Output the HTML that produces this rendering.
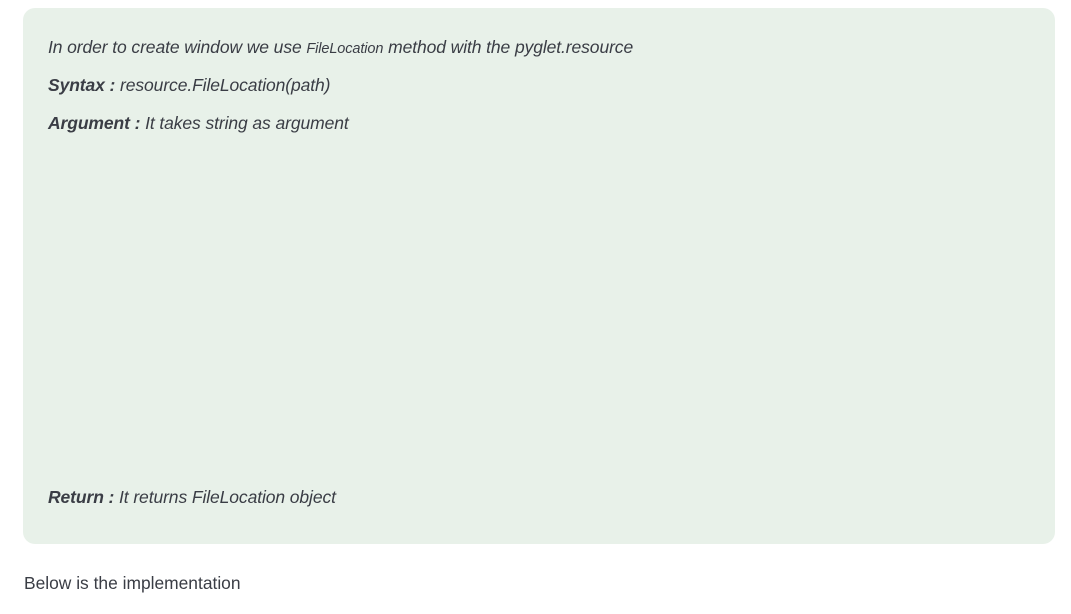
<!DOCTYPE html>
<html><head><style>
body{margin:0;width:1071px;height:614px;background:#fff;font-family:"Liberation Sans",sans-serif;color:#3a3d45;position:relative;overflow:hidden}
.box{position:absolute;left:23px;top:8px;width:1032px;height:536px;background:#e8f1e9;border-radius:12px}
.l{position:absolute;left:48px;font-size:17.5px;font-style:italic;white-space:nowrap;letter-spacing:-0.1px}
.s{font-size:14.5px}
b{font-weight:bold}
.bot{position:absolute;left:24px;top:573px;font-size:17.4px;color:#3a3d45}
</style></head><body>
<div class="box"></div>
<div class="l" style="top:37px">In order to create window we use <span class="s">FileLocation</span> method with the pyglet.resource</div>
<div class="l" style="top:75px"><b>Syntax :</b> resource.FileLocation(path)</div>
<div class="l" style="top:113px"><b>Argument :</b> It takes string as argument</div>
<div class="l" style="top:487px"><b>Return :</b> It returns FileLocation object</div>
<div class="bot">Below is the implementation</div>
</body></html>
